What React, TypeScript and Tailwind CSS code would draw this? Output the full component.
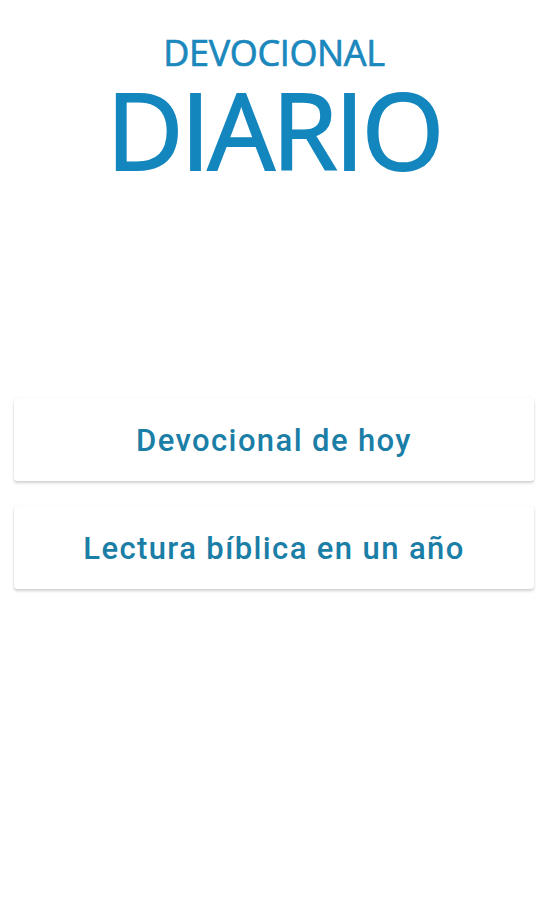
export default function App() {
  const items = ["Devocional de hoy", "Lectura bíblica en un año"];
  return (
    <div className="min-h-[900px] w-full bg-white font-['Open_Sans',sans-serif]">
      <header className="flex flex-col items-center pt-[31px]">
        <div className="text-[36px] leading-[44px] tracking-[-0.01em] text-[#1b88bd] [-webkit-text-stroke:0.7px_#1b88bd]">DEVOCIONAL</div>
        <div className="text-[106px] leading-[108px] tracking-[-0.025em] text-[#1486be] [-webkit-text-stroke:2px_#1486be]">DIARIO</div>
      </header>

      <nav className="mt-[215px] flex flex-col gap-[25px] px-[14px]">
        {items.map((label) => (
          <button
            key={label}
            className="flex h-[83px] w-full items-center justify-center rounded-[3px] bg-white pt-[4px] font-['Roboto',sans-serif] text-[31px] font-medium tracking-[0.045em] text-[#1a7ea6] shadow-[0_2px_3px_rgba(0,0,0,0.18),0_0_1px_rgba(0,0,0,0.12)]"
          >
            {label}
          </button>
        ))}
      </nav>
    </div>
  );
}
